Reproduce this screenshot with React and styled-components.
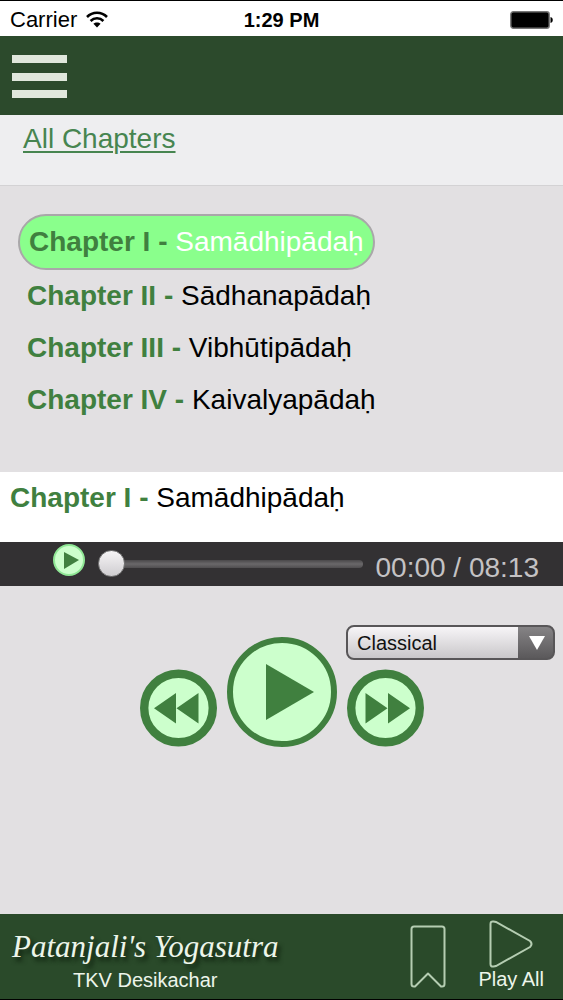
import React, { useState } from 'react'
import styled, { createGlobalStyle } from 'styled-components'

const GlobalStyle = createGlobalStyle`
  * {
    box-sizing: border-box;
  }

  body {
    margin: 0;
    background: #e2e0e2;
    font-family: 'Liberation Sans', Arial, Helvetica, sans-serif;
  }

  button, select, input {
    font-family: inherit;
    margin: 0;
  }
`

const Page = styled.div`
  display: flex;
  flex-direction: column;
  min-height: 100vh;
  border-top: 1px solid #000;
  border-bottom: 1px solid #000;
`

const StatusBar = styled.div`
  display: grid;
  grid-template-columns: 1fr auto 1fr;
  align-items: center;
  height: 35px;
  padding: 2px 10px 0;
  background: #fff;
  color: #000;
  font-size: 22px;
  line-height: 24px;
`

const Carrier = styled.div`
  display: flex;
  align-items: center;
  gap: 9px;
`

const Clock = styled.time`
  font-size: 20px;
  font-weight: bold;
`

const Battery = styled.svg`
  justify-self: end;
`

const Header = styled.header`
  display: flex;
  align-items: center;
  height: 79px;
  padding: 2px 12px 0;
  background: #2c4a2c;
`

const IconButton = styled.button`
  display: flex;
  flex-direction: column;
  align-items: center;
  flex: none;
  padding: 0;
  border: 0;
  background: none;
  color: #edf5ea;
  font-size: 20px;
  line-height: 22px;
  cursor: pointer;

  svg {
    display: block;
  }
`

const SubNav = styled.nav`
  padding: 8px 23px 30px;
  background: #eeeef0;
  border-bottom: 1px solid #d3d2d4;
  font-size: 28px;
  line-height: 32px;

  a {
    color: #478550;
    text-decoration-thickness: 2px;
    text-underline-offset: 3px;
  }
`

const ChapterList = styled.ul`
  margin: 0;
  padding: 28px 18px 46px;
  list-style: none;
`

const ChapterLink = styled.a`
  display: block;
  width: fit-content;
  padding: 10px 9px;
  border: ${props => props.$active ? '2px solid #a9a7a9' : '0'};
  border-radius: 28px;
  background: ${props => props.$active ? '#8aff8c' : 'none'};
  color: ${props => props.$active ? '#fff' : '#000'};
  font-size: 28px;
  line-height: 32px;
  text-decoration: none;
`

const Number = styled.b`
  color: #40803f;
`

const NowPlaying = styled.h1`
  margin: 0;
  padding: 10px 10px 28px;
  background: #fff;
  color: #000;
  font-size: 28px;
  font-weight: normal;
  line-height: 32px;
`

const AudioBar = styled.div`
  display: flex;
  align-items: center;
  gap: 13px;
  height: 44px;
  padding: 0 24px 0 53px;
  background: #333133;
`

const MiniPlay = styled(IconButton)`
  align-self: flex-start;
  padding-top: 2px;
`

const Seek = styled.input`
  flex: 1;
  min-width: 0;
  height: 28px;
  appearance: none;
  background: none;

  &::-webkit-slider-runnable-track {
    height: 8px;
    border-radius: 4px;
    background: linear-gradient(#4a484a, #6a686a 50%, #504e50);
  }

  &::-webkit-slider-thumb {
    appearance: none;
    width: 27px;
    height: 27px;
    margin-top: -10px;
    border: 1px solid #777;
    border-radius: 50%;
    background: linear-gradient(#f6f4f6, #cfcdd0);
  }
`

const Time = styled.span`
  align-self: flex-end;
  color: #c4c2c4;
  font-size: 28px;
  line-height: 36px;
  white-space: nowrap;
`

// the style picker and the transport share one grid cell
const Player = styled.section`
  display: grid;
  flex: 1;
  align-items: start;

  > * {
    grid-area: 1 / 1;
  }
`

const Transport = styled.div`
  display: flex;
  align-items: flex-end;
  justify-content: center;
  gap: 10px;
  padding-top: 51px;
`

const Picker = styled.div`
  display: grid;
  grid-template-columns: 1fr 36px;
  justify-self: end;
  align-items: center;
  width: 209px;
  margin: 39px 8px 0;
  z-index: 1;

  svg {
    grid-area: 1 / 2;
    justify-self: center;
    pointer-events: none;
  }
`

const Select = styled.select`
  grid-area: 1 / 1 / 2 / 3;
  width: 100%;
  height: 35px;
  padding: 0 44px 0 9px;
  appearance: none;
  border: 2px solid #585658;
  border-radius: 8px;
  background:
    linear-gradient(#858385, #5b595b) right / 35px 100% no-repeat,
    linear-gradient(#f7f5f7, #c9c7ca);
  color: #111;
  font-size: 20px;
`

const Footer = styled.footer`
  display: flex;
  align-items: center;
  gap: 32px;
  height: 85px;
  padding: 0 19px 0 12px;
  background: #2a4a2a;
`

const Brand = styled.div`
  margin-right: auto;
  padding-top: 11px;
  color: #edf5ea;
  font-size: 20px;
  line-height: 30px;
  text-align: center;
`

const Title = styled.div`
  font-family: 'Liberation Serif', 'Times New Roman', serif;
  font-size: 31px;
  font-style: italic;
  line-height: 36px;
  text-shadow: 3px 4px 4px #0f220f;
`

const PlayAll = styled(IconButton)`
  padding-bottom: 4px;
`

const chapters = [
  { number: 'Chapter I -', name: 'Samādhipādaḥ' },
  { number: 'Chapter II -', name: 'Sādhanapādaḥ' },
  { number: 'Chapter III -', name: 'Vibhūtipādaḥ' },
  { number: 'Chapter IV -', name: 'Kaivalyapādaḥ' }
]

const Skip = ({ label, flip }) => (
  <IconButton aria-label={label}>
    <svg width="77" height="78" viewBox="0 0 77 78">
      <circle cx="38.500" cy="39" r="34.300" fill="#ccffcc" stroke="#40803f" strokeWidth="8.400" />
      <path
        d="M18.500 24 40.500 39.300 18.500 54.600ZM41 24 63 39.300 41 54.600Z"
        fill="#40803f"
        transform={flip ? 'translate(77 0) scale(-1 1)' : undefined}
      />
    </svg>
  </IconButton>
)

export default function App () {
  const [active, setActive] = useState(0)
  const [position, setPosition] = useState(0)
  const current = chapters[active]

  return (
    <Page>
      <GlobalStyle />
      <StatusBar>
        <Carrier>
          Carrier
          <svg width="22" height="17" viewBox="0 0 22 17" fill="none" stroke="#000" strokeWidth="2.600">
            <path d="M1 6C6.500 .4 15.500 .4 21 6" />
            <path d="M4.600 10C8.300 6.300 13.700 6.300 17.400 10" />
            <path d="M11 16.500 7.400 12.800C9.300 10.900 12.700 10.900 14.600 12.800Z" fill="#000" stroke="none" />
          </svg>
        </Carrier>
        <Clock>1:29 PM</Clock>
        <Battery width="43" height="18" viewBox="0 0 43 18">
          <rect x=".8" y=".8" width="38.400" height="16.400" rx="2.500" fill="#000" stroke="#777" strokeWidth="1.400" />
          <path d="M40.500 6C43.500 6.500 43.500 11.500 40.500 12Z" fill="#000" />
        </Battery>
      </StatusBar>

      <Header>
        <IconButton aria-label="Menu">
          <svg width="55" height="44" viewBox="0 0 55 44" fill="#e0e7dc">
            <rect width="55" height="8" />
            <rect y="18" width="55" height="8" />
            <rect y="35" width="55" height="8" />
          </svg>
        </IconButton>
      </Header>

      <SubNav><a href="#chapters">All Chapters</a></SubNav>

      <ChapterList id="chapters">
        {chapters.map((chapter, i) => (
          <li key={chapter.name}>
            <ChapterLink href="#player" $active={i === active} onClick={() => setActive(i)}>
              <Number>{chapter.number}</Number> {chapter.name}
            </ChapterLink>
          </li>
        ))}
      </ChapterList>

      <NowPlaying id="player"><Number>{current.number}</Number> {current.name}</NowPlaying>

      <AudioBar>
        <MiniPlay aria-label="Play">
          <svg width="32" height="32" viewBox="0 0 32 32">
            <circle cx="16" cy="16" r="15" fill="#ccffcc" stroke="#8fe795" strokeWidth="2" />
            <path d="M11 8 26 16 11 25Z" fill="#40803f" />
          </svg>
        </MiniPlay>
        <Seek
          type="range"
          aria-label="Position"
          min="0"
          max="493"
          value={position}
          onChange={e => setPosition(e.target.value)}
        />
        <Time>00:00 / 08:13</Time>
      </AudioBar>

      <Player>
        <Transport>
          <Skip label="Previous" flip />
          <IconButton aria-label="Play chapter">
            <svg width="110" height="110" viewBox="0 0 110 110">
              <circle cx="55" cy="55" r="52" fill="#ccffcc" stroke="#40803f" strokeWidth="6" />
              <path d="M39 27 87 55 39 83Z" fill="#40803f" />
            </svg>
          </IconButton>
          <Skip label="Next" />
        </Transport>
        <Picker>
          <Select aria-label="Style" defaultValue="Classical">
            <option>Classical</option>
          </Select>
          <svg width="16" height="14" viewBox="0 0 16 14"><path d="M0 0H16L8 14Z" fill="#fff" /></svg>
        </Picker>
      </Player>

      <Footer>
        <Brand>
          <Title>Patanjali's Yogasutra</Title>
          TKV Desikachar
        </Brand>
        <IconButton aria-label="Bookmark">
          <svg width="36" height="63" viewBox="0 0 36 63" fill="none" stroke="#b5cdb2" strokeWidth="2" strokeLinejoin="round">
            <path d="M4 1.500H32Q34.500 1.500 34.500 4V59Q34.500 61.500 32 61.500H31L18 48.500 5 61.500H4Q1.500 61.500 1.500 59V4Q1.500 1.500 4 1.500Z" />
          </svg>
        </IconButton>
        <PlayAll>
          <svg width="44" height="48" viewBox="0 0 44 48" fill="none" stroke="#b5cdb2" strokeWidth="2">
            <path d="M1.500 4Q1.500 1 4.500 1.500L7 2 41 21Q44 24 41 27L7 46 4.500 46.500Q1.500 47 1.500 44Z" />
          </svg>
          Play All
        </PlayAll>
      </Footer>
    </Page>
  )
}
